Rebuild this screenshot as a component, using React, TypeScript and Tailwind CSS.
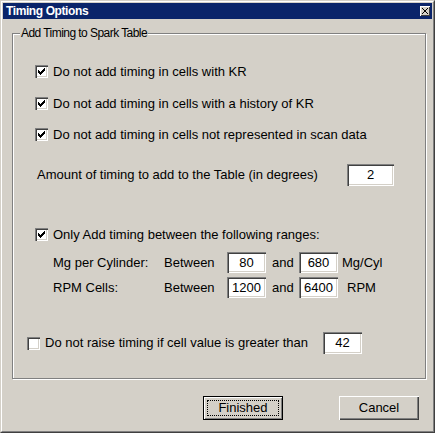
import React from "react";

const sunken =
  "bg-white shadow-[inset_1px_1px_0_#808080,inset_2px_2px_0_#404040,inset_-1px_-1px_0_#ffffff,inset_-2px_-2px_0_#d4d0c8]";

function Check({ checked }: { checked: boolean }) {
  return (
    <div className={`relative w-[13px] h-[13px] shrink-0 ${sunken}`}>
      {checked && (
        <svg
          width="13"
          height="13"
          viewBox="0 0 13 13"
          shapeRendering="crispEdges"
          className="absolute left-0 top-0"
        >
          <path
            d="M9 3h1v1h-1z M8 4h2v1h-2z M3 5h1v1h-1z M7 5h3v1h-3z M3 6h2v1h-2z M6 6h3v1h-3z M3 7h5v1h-5z M4 8h3v1h-3z M5 9h1v1h-1z"
            fill="#000"
          />
        </svg>
      )}
    </div>
  );
}

function Field({ value, w, h }: { value: string; w: string; h: string }) {
  return (
    <div className={`${sunken} ${w} ${h} shrink-0 flex items-center justify-center text-[13px] leading-[16px] text-black`}>
      {value}
    </div>
  );
}

function CheckRow({ checked, label }: { checked: boolean; label: string }) {
  return (
    <div className="flex items-center h-[13px] gap-[5px]">
      <Check checked={checked} />
      <span className="text-[13px] leading-[16px] whitespace-nowrap">{label}</span>
    </div>
  );
}

export default function App() {
  return (
    <div className="w-[435px] h-[433px] bg-[#d4d0c8] font-['Liberation_Sans',Arial,sans-serif] text-black">
      <div className="w-full h-full border border-t-[#d4d0c8] border-l-[#d4d0c8] border-r-[#404040] border-b-[#404040]">
        <div className="w-full h-full border border-t-white border-l-white border-r-[#808080] border-b-[#808080] p-[1px]">
          {/* Title bar */}
          <div className="h-[16px] bg-[#0a246a] flex items-center justify-between pl-[3px] pr-[2px]">
            <span className="text-white font-bold text-[12px] leading-[14px] tracking-[-0.4px] whitespace-nowrap">
              Timing Options
            </span>
            <div className="w-[10px] h-[10px] bg-[#d4d0c8] shadow-[inset_1px_1px_0_#fff,inset_-1px_-1px_0_#404040] flex items-center justify-center">
              <svg width="6" height="6" viewBox="0 0 6 6" shapeRendering="crispEdges">
                <path d="M0 0h1v1h-1z M1 1h1v1h-1z M2 2h2v2h-2z M4 1h1v1h-1z M5 0h1v1h-1z M1 4h1v1h-1z M0 5h1v1h-1z M4 4h1v1h-1z M5 5h1v1h-1z" fill="#000" />
              </svg>
            </div>
          </div>

          {/* Body */}
          <div className="pl-[9px] pr-[6px] pt-[14px]">
            <div className="relative h-[346px] border border-[#808080] shadow-[inset_1px_1px_0_#fff,1px_1px_0_#fff]">
              <span className="absolute left-[7px] top-[-9px] px-[1px] bg-[#d4d0c8] text-[12px] leading-[16px] tracking-[-0.55px] whitespace-nowrap">
                Add Timing to Spark Table
              </span>

              <div className="pt-[31px] pl-[22px]">
                <CheckRow checked label="Do not add timing in cells with KR" />
                <div className="mt-[19px]">
                  <CheckRow checked label="Do not add timing in cells with a history of KR" />
                </div>
                <div className="mt-[18px]">
                  <CheckRow checked label="Do not add timing in cells not represented in scan data" />
                </div>
              </div>

              <div className="mt-[23px] pl-[24px] flex items-center h-[22px]">
                <span className="w-[310px] text-[13px] leading-[16px] whitespace-nowrap">
                  Amount of timing to add to the Table (in degrees)
                </span>
                <Field value="2" w="w-[47px]" h="h-[22px]" />
              </div>

              <div className="mt-[42px] pl-[22px]">
                <CheckRow checked label="Only Add timing between the following ranges:" />
              </div>

              <div className="mt-[11px] pl-[40px] flex items-center h-[21px] text-[13px] leading-[16px] whitespace-nowrap">
                <span className="w-[111px]">Mg per Cylinder:</span>
                <span className="w-[63px]">Between</span>
                <Field value="80" w="w-[39px]" h="h-[21px]" />
                <span className="w-[33px] pl-[6px]">and</span>
                <Field value="680" w="w-[39px]" h="h-[21px]" />
                <span className="pl-[4px]">Mg/Cyl</span>
              </div>

              <div className="mt-[4px] pl-[40px] flex items-center h-[21px] text-[13px] leading-[16px] whitespace-nowrap">
                <span className="w-[111px]">RPM Cells:</span>
                <span className="w-[63px]">Between</span>
                <Field value="1200" w="w-[39px]" h="h-[21px]" />
                <span className="w-[33px] pl-[6px]">and</span>
                <Field value="6400" w="w-[39px]" h="h-[21px]" />
                <span className="pl-[9px]">RPM</span>
              </div>

              <div className="mt-[34px] pl-[14px] flex items-center h-[22px]">
                <Check checked={false} />
                <span className="ml-[5px] w-[278px] text-[13px] leading-[16px] whitespace-nowrap">
                  Do not raise timing if cell value is greater than
                </span>
                <Field value="42" w="w-[39px]" h="h-[22px]" />
              </div>
            </div>

            {/* Buttons */}
            <div className="mt-[17px] flex justify-end gap-[56px] pr-[7px]">
              <div className="relative w-[80px] h-[24px] border border-black bg-[#d4d0c8] shadow-[inset_1px_1px_0_#fff,inset_-1px_-1px_0_#808080] flex items-center justify-center text-[13px] leading-[16px]">
                <div className="absolute left-[3px] right-[3px] top-[3px] bottom-[3px] border border-dotted border-black" />
                Finished
              </div>
              <div className="w-[80px] h-[24px] bg-[#d4d0c8] shadow-[inset_1px_1px_0_#fff,inset_-1px_-1px_0_#404040,inset_-2px_-2px_0_#808080] flex items-center justify-center text-[13px] leading-[16px]">
                Cancel
              </div>
            </div>
          </div>
        </div>
      </div>
    </div>
  );
}
